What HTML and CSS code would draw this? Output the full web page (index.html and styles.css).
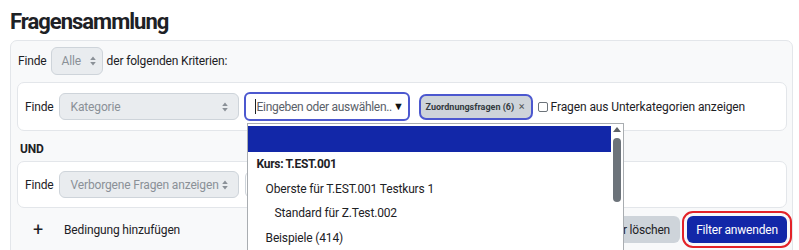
FILE: index.html
```html
<!DOCTYPE html>
<html lang="de">
<head>
<meta charset="utf-8">
<title>Fragensammlung</title>
<link rel="stylesheet" href="styles.css">
</head>
<body>
<h1 class="title">Fragensammlung</h1>
<div class="panel">
  <div class="top-row">
    <span class="lbl">Finde</span>
    <span class="select sel-alle">Alle <svg class="arrows" viewBox="0 0 6 10" width="6" height="10"><path d="M3 0.5 L5.8 4 H0.2 Z M3 9.5 L5.8 6 H0.2 Z"/></svg></span>
    <span class="lbl">der folgenden Kriterien:</span>
  </div>

  <div class="card">
    <span class="lbl">Finde</span>
    <span class="select sel-wide">Kategorie <svg class="arrows" viewBox="0 0 6 10" width="6" height="10"><path d="M3 0.5 L5.8 4 H0.2 Z M3 9.5 L5.8 6 H0.2 Z"/></svg></span>
    <div class="combo">
      <div class="ac-input"><span class="cursor"></span><span class="ph">Eingeben oder auswählen..</span><span class="tri">▼</span></div>
      <div class="dropdown">
        <ul class="options">
          <li class="opt active"></li>
          <li class="opt group">Kurs: T.EST.001</li>
          <li class="opt lvl1">Oberste für T.EST.001 Testkurs 1</li>
          <li class="opt lvl2">Standard für Z.Test.002</li>
          <li class="opt lvl1">Beispiele (414)</li>
        </ul>
        <div class="scrollbar">
          <span class="sb-arrow"></span>
          <span class="sb-thumb"></span>
        </div>
      </div>
    </div>
    <span class="chip">Zuordnungsfragen (6)<span class="chip-x">×</span></span>
    <label class="check"><span class="box"></span>Fragen aus Unterkategorien anzeigen</label>
  </div>

  <div class="und">UND</div>

  <div class="card">
    <span class="lbl">Finde</span>
    <span class="select sel-wide">Verborgene Fragen anzeigen <svg class="arrows" viewBox="0 0 6 10" width="6" height="10"><path d="M3 0.5 L5.8 4 H0.2 Z M3 9.5 L5.8 6 H0.2 Z"/></svg></span>
    <span class="select sel-hidden"></span>
  </div>

  <div class="actions">
    <span class="add"><span class="plus">+</span>Bedingung hinzufügen</span>
    <div class="buttons">
      <button class="btn btn-secondary" type="button">Alle Filter löschen</button>
      <button class="btn btn-primary marked" type="button">Filter anwenden</button>
    </div>
  </div>
</div>
</body>
</html>
```

FILE: styles.css
```css
html, body {
  margin: 0;
  padding: 0;
  background: #ffffff;
  overflow: hidden;
}
body {
  font-family: Roboto, "Liberation Sans", sans-serif;
  font-size: 12px;
  letter-spacing: -0.15px;
  color: #1d2125;
  width: 799px;
  height: 250px;
}
.title {
  margin: 3px 0 0 10px;
  font-size: 22px;
  line-height: 37px;
  font-weight: 700;
  letter-spacing: -1px;
  color: #1d2125;
}
.panel {
  margin: 0 6px 0 10px;
  background: #f8f9fa;
  border: 1px solid #e3e6ea;
  border-radius: 7px;
  padding: 6px 5px 0 6px;
  height: 260px;
  box-sizing: border-box;
}
.top-row {
  display: flex;
  align-items: center;
  gap: 4px;
  height: 28px;
  padding-left: 1px;
  white-space: nowrap;
}
.select {
  display: inline-flex;
  align-items: center;
  justify-content: space-between;
  box-sizing: border-box;
  background: #e9ecef;
  border: 1px solid #ced4da;
  border-radius: 6px;
  color: #8a9097;
  padding: 0 10px 0 11px;
  white-space: nowrap;
  flex: none;
}
.arrows { fill: #8a9097; flex: none; }
.sel-alle {
  width: 52px;
  height: 28px;
  padding: 0 6px 0 10px;
}
.sel-wide {
  width: 180px;
  height: 27px;
}
.card {
  margin-top: 7px;
  background: #ffffff;
  border: 1px solid #e3e6ea;
  border-radius: 7px;
  display: flex;
  align-items: center;
  padding: 9px 0 9px 7px;
  height: 49px;
  box-sizing: border-box;
  white-space: nowrap;
}
.card .lbl { margin-right: 5px; }
.combo {
  position: relative;
  margin-left: 5px;
  flex: none;
}
.ac-input {
  width: 166px;
  height: 29px;
  box-sizing: border-box;
  border: 2px solid #4c58cf;
  border-radius: 6px;
  display: flex;
  align-items: center;
  padding: 0 6px 0 9px;
  color: #5a6169;
  background: #fff;
}
.cursor {
  width: 1px;
  height: 15px;
  background: #1d2125;
  margin-right: 1px;
  flex: none;
}
.ph {
  white-space: nowrap;
  letter-spacing: -0.3px;
}
.tri { color: #111; font-size: 11px; margin-left: 1px; flex: none; }
.dropdown {
  position: absolute;
  left: 3px;
  top: 31px;
  width: 377px;
  height: 140px;
  background: #fff;
  border: 1px solid #a9adb1;
  box-sizing: border-box;
  display: flex;
  z-index: 5;
}
.options {
  list-style: none;
  margin: 0;
  padding: 2px 0 0 0;
  flex: 1;
}
.opt {
  height: 24.5px;
  line-height: 24.5px;
  padding-left: 9px;
  white-space: nowrap;
  color: #1d2125;
}
.opt.active {
  background: #1227a8;
  height: 26px;
}
.opt.group { font-weight: 700; letter-spacing: -0.3px; }
.opt.lvl1 { padding-left: 18px; }
.opt.lvl2 { padding-left: 27px; }
.scrollbar {
  width: 12px;
  position: relative;
  background: #fff;
}
.sb-arrow {
  position: absolute;
  left: 2px;
  top: 3px;
  width: 0;
  height: 0;
  border-left: 4px solid transparent;
  border-right: 4px solid transparent;
  border-bottom: 5px solid #5f6368;
}
.sb-thumb {
  position: absolute;
  left: 2px;
  top: 14px;
  width: 8px;
  height: 64px;
  border-radius: 4px;
  background: #6c737a;
}
.chip {
  margin-left: 9px;
  height: 26px;
  box-sizing: border-box;
  background: #ced4da;
  border: 2px solid #4c58cf;
  border-radius: 7px;
  display: inline-flex;
  align-items: center;
  padding: 0 6px 0 5px;
  font-size: 9px;
  letter-spacing: 0;
  font-weight: 700;
  color: #333a40;
  width: 114px;
  white-space: nowrap;
  flex: none;
}
.chip-x {
  margin-left: auto;
  font-weight: 400;
  font-size: 11px;
  color: #555;
}
.check {
  margin-left: 5px;
  display: inline-flex;
  align-items: center;
  white-space: nowrap;
  font-size: 12px;
  letter-spacing: -0.1px;
}
.box {
  width: 10px;
  height: 10px;
  box-sizing: border-box;
  border: 1px solid #6c737a;
  border-radius: 2px;
  margin-right: 3px;
  background: #fff;
}
.und {
  font-weight: 700;
  margin: 6px 0 0 3px;
  height: 24px;
  line-height: 24px;
}
.und + .card {
  margin-top: 0;
  height: 47px;
  padding-left: 7px;
}
.sel-wide + .sel-hidden { margin-left: 6px; }
.sel-hidden {
  width: 120px;
  height: 27px;
  background: #fff;
}
.actions {
  display: flex;
  align-items: center;
  margin-top: 8px;
  height: 27px;
  white-space: nowrap;
}
.add {
  display: inline-flex;
  align-items: center;
  padding-left: 16px;
}
.plus {
  font-size: 18px;
  font-weight: 400;
  width: 31px;
  line-height: 18px;
}
.buttons {
  margin-left: auto;
  display: flex;
  gap: 7px;
}
.btn {
  font-family: inherit;
  font-size: 12px;
  letter-spacing: -0.2px;
  height: 27px;
  border: none;
  border-radius: 6px;
  padding: 0 10px;
  cursor: pointer;
  white-space: nowrap;
}
.btn-secondary {
  background: #ced4da;
  color: #1d2125;
}
.btn-primary {
  background: #1227a8;
  color: #ffffff;
  width: 100px;
  padding: 0 6px;
}
.marked {
  outline: 2px solid #e32228;
  outline-offset: 3px;
}
```
